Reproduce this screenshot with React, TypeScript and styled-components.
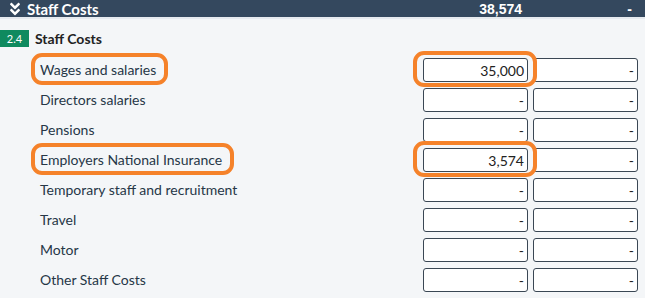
import { createGlobalStyle, styled } from "styled-components";
import { FaAngleDoubleDown } from "react-icons/fa";

const GlobalStyle = createGlobalStyle`
  html, body {
    margin: 0;
    padding: 0;
    background: #f4f6f8;
  }
  body {
    font-family: Lato, "Noto Sans", sans-serif;
    color: #2c3e50;
  }
`;

const Panel = styled.div`
  width: 645px;
  height: 298px;
  overflow: hidden;
  background: #f4f6f8;
`;

const Header = styled.div`
  display: grid;
  grid-template-columns: 1fr 105px 105px;
  column-gap: 5px;
  align-items: center;
  height: 17px;
  padding: 0 13px 0 7px;
  background: #34485e;
  color: #fff;
  border-bottom: 2px solid #e6eaef;

  .title {
    display: flex;
    align-items: center;
    gap: 4px;
    font-size: 15px;
    font-weight: 700;
  }

  .num {
    text-align: right;
    font-family: "Liberation Sans", Arial, sans-serif;
    font-size: 14px;
    font-weight: 700;
  }
`;

const SubHeading = styled.div`
  display: flex;
  align-items: center;
  gap: 6px;
  height: 17px;
  margin: 11px 0 8px;
  font-size: 14px;
  font-weight: 700;
  color: #222;
`;

const Badge = styled.span`
  display: inline-flex;
  align-items: center;
  justify-content: center;
  width: 29px;
  height: 17px;
  background: #0f8a5f;
  color: #fff;
  font-size: 11px;
  font-weight: 400;
`;

const Row = styled.div`
  display: grid;
  grid-template-columns: 1fr 105px 105px;
  column-gap: 5px;
  align-items: center;
  height: 30px;
  padding: 0 7px 0 40px;
`;

const Label = styled.span<{ $mark?: boolean }>`
  position: relative;
  justify-self: start;
  font-size: 14px;
  line-height: 18px;
  color: #263747;

  &::before {
    content: "";
    display: ${(p) => (p.$mark ? "block" : "none")};
    position: absolute;
    inset: -8px -12px -6px -9px;
    border: 4px solid #f5822a;
    border-radius: 11px;
  }
`;

const Cell = styled.div<{ $mark?: boolean }>`
  position: relative;
  box-sizing: border-box;
  height: 24px;
  padding: 0 3px;
  display: flex;
  align-items: center;
  justify-content: flex-end;
  background: #fff;
  border: 1px solid #3a4754;
  border-radius: 3px;
  font-size: 14px;
  color: #222;
  z-index: ${(p) => (p.$mark ? 2 : 1)};

  &::before {
    content: "";
    display: ${(p) => (p.$mark ? "block" : "none")};
    position: absolute;
    inset: -8px -10px -6px -11px;
    border: 4px solid #f5822a;
    border-radius: 11px;
  }
`;

const rows = [
  { label: "Wages and salaries", value: "35,000", mark: true },
  { label: "Directors salaries", value: "-" },
  { label: "Pensions", value: "-" },
  { label: "Employers National Insurance", value: "3,574", mark: true },
  { label: "Temporary staff and recruitment", value: "-" },
  { label: "Travel", value: "-" },
  { label: "Motor", value: "-" },
  { label: "Other Staff Costs", value: "-" },
];

export default function App() {
  return (
    <>
      <GlobalStyle />
      <Panel>
        <Header>
          <span className="title">
            <FaAngleDoubleDown size={16} />
            Staff Costs
          </span>
          <span className="num">38,574</span>
          <span className="num">-</span>
        </Header>
        <SubHeading>
          <Badge>2.4</Badge>
          Staff Costs
        </SubHeading>
        {rows.map((r) => (
          <Row key={r.label}>
            <Label $mark={r.mark}>{r.label}</Label>
            <Cell $mark={r.mark}>{r.value}</Cell>
            <Cell>-</Cell>
          </Row>
        ))}
      </Panel>
    </>
  );
}
